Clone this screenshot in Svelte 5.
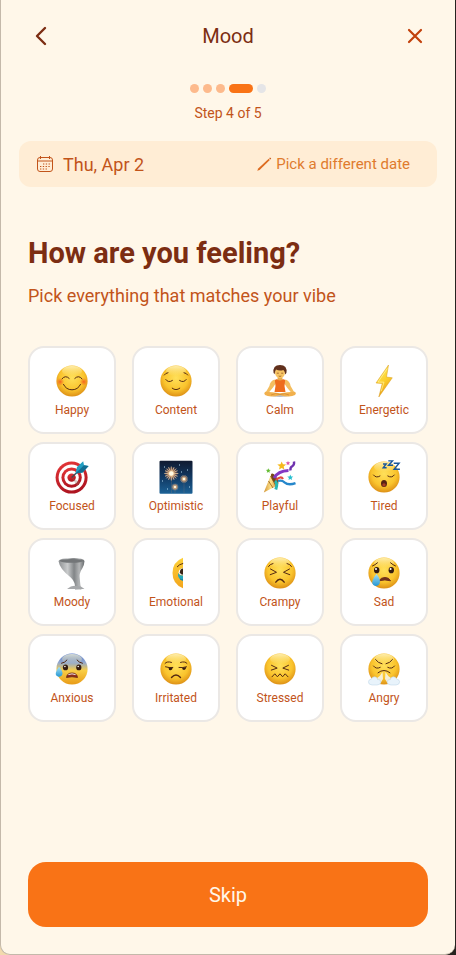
<script lang="ts">
  interface Mood {
    id: string;
    label: string;
  }

  const moods: Mood[] = [
    { id: 'happy', label: 'Happy' },
    { id: 'content', label: 'Content' },
    { id: 'calm', label: 'Calm' },
    { id: 'energetic', label: 'Energetic' },
    { id: 'focused', label: 'Focused' },
    { id: 'optimistic', label: 'Optimistic' },
    { id: 'playful', label: 'Playful' },
    { id: 'tired', label: 'Tired' },
    { id: 'moody', label: 'Moody' },
    { id: 'emotional', label: 'Emotional' },
    { id: 'crampy', label: 'Crampy' },
    { id: 'sad', label: 'Sad' },
    { id: 'anxious', label: 'Anxious' },
    { id: 'irritated', label: 'Irritated' },
    { id: 'stressed', label: 'Stressed' },
    { id: 'angry', label: 'Angry' }
  ];

  const totalSteps = 5;
  const currentStep = 4;

  let selected = $state<string[]>([]);

  function toggle(id: string) {
    selected = selected.includes(id)
      ? selected.filter(m => m !== id)
      : [...selected, id];
  }
</script>

{#snippet face(fill = 'url(#face)')}
  <circle cx="17" cy="17" r="15.6" {fill} />
  <ellipse cx="17" cy="7" rx="10" ry="5" fill="url(#shine)" />
{/snippet}

{#snippet star(x: number, y: number, r: number, fill: string)}
  <path
    transform="translate({x} {y}) scale({r})"
    d="M0-1 .28-.36 1-.3 .45.16 .6.85 0 .48-.6.85-.45.16-1-.3-.28-.36Z"
    {fill}
  />
{/snippet}

{#snippet burst(x: number, y: number, r: number)}
  <g transform="translate({x} {y}) scale({r})">
    <circle r="1" fill="url(#glow)" />
    <path
      d="M0-1V1M-1 0H1M-.7-.7.7.7M-.7.7.7-.7M-.4-.9.4.9M.4-.9-.4.9M-.9-.4.9.4M-.9.4.9-.4"
      stroke="#ffd9a0"
      stroke-width=".1"
    />
    <circle r=".32" fill="#fffbe6" />
  </g>
{/snippet}

{#snippet emoji(id: string)}
  <svg class="emoji" viewBox="0 0 34 34" aria-hidden="true">
    {#if id === 'happy'}
      {@render face()}
      <circle cx="5.2" cy="17.8" r="3.8" fill="url(#blush)" />
      <circle cx="28.8" cy="17.8" r="3.8" fill="url(#blush)" />
      <path class="ink" d="M7 14.8q3.4-4.2 7.2-.4M19.8 14.4q3.8-3.8 7.2.4M8.5 20.4q2.6 5.4 8.5 5.4t8.5-5.4" />
    {:else if id === 'content'}
      {@render face()}
      <path class="ink" d="M5.3 11q1.2-2 3.7-2.3M25 8.7q2.500.3 3.700 2.300M6.800 15.500q2.500 3.800 6.600 1M20.600 16.500q4.100 2.800 6.600-1M13.200 24.200q3.800 3 7.600 0" />
    {:else if id === 'calm'}
      <ellipse cx="17" cy="31.6" rx="9" ry="1.3" fill="#b9bdc6" />
      <path d="M11.5 15.5Q7 17 6.4 22L2.6 28.6 5 29.6 10 23.5 13 19ZM22.5 15.5Q27 17 27.6 22l3.8 6.6-2.4 1-5-6.1-3-4.5Z" fill="#f4bd5e" />
      <path d="M14.6 11h4.8v4.4l2.6.8-2 3h-6l-2-3 2.6-.8Z" fill="#e9a94b" />
      <path d="M11.8 16q1.5-1 2.2-.8 3 2.8 6 0 1.2 0 2.2.8l-.7 6 1 6H11.5l1-6Z" fill="#ee6c1b" />
      <path d="M2.2 27.8q7 .2 14.8 1.4 7.8-1.2 14.8-1.4 2 1.4.2 3.2-4.5 2.8-15 .2Q6.5 33.8 2 31q-1.600-1.600.2-3.200Z" fill="#f1b04d" />
      <path d="M8 31q5-2.6 9-.4 5-2 9 .4" fill="none" stroke="#c97f29" stroke-width=".6" />
      <ellipse cx="17" cy="8.6" rx="5" ry="5.6" fill="#f8c564" />
      <path d="M10.600 9q-1.200-8 6.400-8t6.400 8l-1.200 1.500q0-3-1.800-4.500-4 1.200-7.400-.4Q12 7.500 11.600 10.300Z" fill="#61301c" />
      <path d="M13.8 9.2h2M18.2 9.2h2M15.7 12q1.3.8 2.6 0" fill="none" stroke="#8a4a20" stroke-width=".7" />
    {:else if id === 'energetic'}
      <path d="M21.5 1 9 19l6.2.6L11.8 33 25.3 13.8l-5.800-.8Z" fill="url(#bolt)" stroke="#d99a1c" stroke-width=".5" stroke-linejoin="round" />
      <path d="M20.3 4.5 11 18l6 .2-2.800 9" fill="none" stroke="#fff2a0" stroke-width=".7" />
    {:else if id === 'focused'}
      <circle cx="16.6" cy="17.6" r="16" fill="url(#red)" />
      <circle cx="16.6" cy="17.6" r="13" fill="#fff" />
      <circle cx="16.6" cy="17.6" r="10.2" fill="url(#red)" />
      <circle cx="16.6" cy="17.6" r="7.2" fill="#fff" />
      <circle cx="16.6" cy="17.6" r="4.2" fill="url(#red)" />
      <path d="M17 18l5 8 3-4Z" fill="#8b6f60" opacity=".35" />
      <path d="M16.6 17.6 25 9.5" stroke="#3d4c58" stroke-width="1.4" />
      <path d="M20.5 13.5 22 7l6.2-5.8.8 4 4.6.8-6 6.5Z" fill="#219fc2" />
      <path d="M20.5 13.5 29 5.2l4.6.8-6 6.5Z" fill="#126e93" />
    {:else if id === 'optimistic'}
      <rect x=".5" y=".7" width="33" height="33" rx="1" fill="url(#night)" />
      <path d="M12.5 16v17M25 20v13M16 28v5" stroke="#d98b5a" stroke-width=".4" opacity=".4" />
      {@render burst(12.3, 13.5, 7)}
      {@render burst(25, 19, 4)}
      {@render burst(16, 27, 3.5)}
      <path d="M5 7h1M20 5h1M28 10h1M3 21h1M30 27h1M8 29h1M22 12h1" stroke="#b3d9ee" stroke-width="1" />
    {:else if id === 'playful'}
      <path d="M.8 32.6 8.5 13.5q5 2.500 6.500 11.500Z" fill="url(#cone)" />
      <path d="M5.5 21l4.5 7M7.5 16l5.5 10.2" stroke="#9d6720" stroke-width=".9" />
      <ellipse cx="11.7" cy="19" rx="2.4" ry="6.2" transform="rotate(-30 11.7 19)" fill="#754716" />
      <path d="M11 18q4-7 14.5-7.500" fill="none" stroke="#8438c4" stroke-width="3" />
      <path d="M13 20q5-4.500 7-1" fill="none" stroke="#e44b40" stroke-width="2.2" />
      <path d="M12 21q3 2 .8 8.5" fill="none" stroke="#28b7b2" stroke-width="3" />
      <path d="M27.5 10.5q-.6-3.200 2-4.500 2-1.200 1.500-4.500" fill="none" stroke="#6f32ae" stroke-width="2.4" />
      <path d="M15 21q4-1 6.5 1.3 4 3.5 11 .8" fill="none" stroke="#2687cb" stroke-width="2.3" />
      {@render star(5.3, 10.7, 2.5, '#66bd36')}
      {@render star(18.7, 5.8, 4.4, '#f6b91b')}
      {@render star(25, 3.2, 2.3, '#d955a9')}
      {@render star(27.3, 17.5, 3, '#29bfcf')}
    {:else if id === 'tired'}
      {@render face()}
      <path class="ink" d="M6.5 15q2.500 3.500 6.500 1M20.800 16q4 2.500 6.500-1" />
      <ellipse cx="17" cy="23.6" rx="3" ry="3.5" fill="#572313" />
      <ellipse cx="17" cy="24.8" rx="1.7" ry="1.6" fill="#a83d26" />
      <path d="M16 4h3.200l-3 3.800h3.400M21.300.9h4.200l-4 4.400H26M26.700 3.200h5.400l-5 6h5.800" fill="none" stroke="#18579c" stroke-width="1.4" />
    {:else if id === 'moody'}
      <g filter="url(#soft)">
        <path d="M3.5 5Q5 2 17 2t12.500 3q-.3 4.500-2 7-3.800 5.500-2.700 11 .2 6 1.600 10.500H20q1-7-4-11.800Q4.500 13 3.500 5Z" fill="url(#tornado)" />
        <ellipse cx="16.5" cy="4.8" rx="12" ry="1.9" fill="#737678" />
        <path d="M12 33q5-4 9-3 5-.7 8.500 3Z" fill="#a6a8aa" />
      </g>
    {:else if id === 'emotional'}
      <path d="M24 1.8v30.500q-10.500-4-10.500-15.200T24 1.800Z" fill="url(#half)" />
      <path class="ink" d="M18.3 10.7q2-2.500 5.500-3.200" />
      <path d="M24 12.2q-4 .2-4.500 4.500 1.700 3 4.500 2.600Z" fill="#fff" />
      <path d="M24 12.6q-3 .3-3.200 3.800.8 2.200 3.200 2.300Z" fill="#3b2416" />
      <path d="M19 17q2 3.200 5 2.400v5.600q-5.600-2-5-8Z" fill="#24a7bc" />
      <path d="M21 23q1.400 1 3 .8" fill="none" stroke="#126e8a" stroke-width=".8" />
    {:else if id === 'crampy'}
      {@render face()}
      <path class="ink" d="M5.5 10.5Q7 8 10 7.500M24 7.500q3 .5 4.500 3M7.500 13l6 3.300-6.300 2.400M26.500 13l-6 3.300 6.300 2.400" />
      <path class="ink thick" d="M12.8 26.2q4.200-6 8.400 0" />
    {:else if id === 'sad'}
      {@render face()}
      <ellipse cx="9.7" cy="14.2" rx="2.7" ry="3.1" fill="#341c10" />
      <ellipse cx="24.3" cy="14.2" rx="2.7" ry="3.1" fill="#341c10" />
      <circle cx="9" cy="13" r="1" fill="#fff" />
      <circle cx="23.6" cy="13" r="1" fill="#fff" />
      <path class="ink" d="M5.5 10Q8 9 10.500 6.800M23.500 6.800Q26 9 28.500 10" />
      <path d="M12 24.8q2-3.300 6-3.300t5.500 3.300q-5.500-1.800-11.500 0Z" fill="#71311b" stroke="#71311b" />
      <path d="M9.5 17.8q4.500 6.200 3.300 9.500-1.500 3.500-5 2.400-3.500-1.500-2.300-5 1-3.400 4-6.900Z" fill="url(#tear)" />
    {:else if id === 'anxious'}
      {@render face('url(#cold)')}
      <ellipse cx="10.5" cy="15.4" rx="2.6" ry="2.9" fill="#341c10" />
      <ellipse cx="23.8" cy="15.4" rx="2.6" ry="2.9" fill="#341c10" />
      <circle cx="9.9" cy="14.5" r=".8" fill="#fff" />
      <circle cx="23.2" cy="14.5" r=".8" fill="#fff" />
      <path class="ink" d="M6.5 11.300q3.800-.7 5.500-3.300M22 8q1.700 2.600 5.500 3.300" />
      <path d="M11.5 25.5q.5-4.500 5.500-4.500t5.500 4.500q-5.500-1.500-11 0Z" fill="#8f2c1d" stroke="#672514" stroke-width=".8" />
      <path d="M13.4 22.600q3.600-1.500 7.200 0" stroke="#fff" fill="none" stroke-width=".9" />
      <path d="M4 14.8q4 4.500 3.500 7.300-.7 3-3.700 2.700-3.500-.6-3-3.800.6-3 3.200-6.200Z" fill="url(#tear)" />
    {:else if id === 'irritated'}
      {@render face()}
      <path class="ink" d="M6 11.4q2-2.500 6.500-1M21.500 10.400q4.500-1.500 6.500 1M6.500 14.800q3.500 1.200 7.300.7M20 15.500q3.800.5 7.500-.7" />
      <path d="M9.5 15.4q2 .6 4.300.2-.5 2.800-2.400 2.600-1.900-.2-1.900-2.800ZM23 15.600q2.300.2 4.200-.5-.1 2.900-2 3-1.900.1-2.200-2.500Z" fill="#341c10" />
      <path class="ink thick" d="M12.5 25.5q4.500-5 9 0" />
    {:else if id === 'stressed'}
      {@render face()}
      <path class="ink" d="M8.5 13.300l5.700 2.800-5.900 2M25.500 13.300l-5.700 2.800 5.900 2" />
      <path class="ink" d="M9 24.800l2.800-3 2.600 3 2.600-3 2.600 3 2.600-3 2.800 3" />
    {:else if id === 'angry'}
      {@render face()}
      <path class="ink" d="M8.5 7.500q2.500 3.600 6.500 4.300M25.500 7.500q-2.500 3.600-6.500 4.300M6.500 14q2.500 3.600 6.700 1.400M20.800 15.400q4.200 2.200 6.700-1.400M11 20.800q6-4.800 12 0" />
      <path d="M15.500 20q-2 4-5.500 6l3 6 3-5ZM18.500 20q2 4 5.500 6l-3 6-3-5Z" fill="#f5fbff" opacity=".8" />
      <path d="M5 33q-3.800-.3-3.600-3.300.3-2.400 2.800-2.400.8-3 3.800-2.500 2.200.4 2.500 2.500 3.500 0 3.200 3Q13.300 33 10 33ZM29 33q3.800-.3 3.600-3.300-.3-2.400-2.800-2.400-.8-3-3.800-2.500-2.200.4-2.500 2.500-3.500 0-3.200 3 .4 2.700 3.700 2.700Z" fill="#e8f3fb" stroke="#b9d3e4" stroke-width=".5" />
    {/if}
  </svg>
{/snippet}

<!-- gradients shared by all the mood icons -->
<svg class="defs" width="0" height="0" aria-hidden="true">
  <defs>
    <radialGradient id="face" cx=".5" cy=".4" r=".6">
      <stop offset="0" stop-color="#ffe05a" />
      <stop offset=".65" stop-color="#fac42d" />
      <stop offset="1" stop-color="#dd9016" />
    </radialGradient>
    <linearGradient id="shine" x2="0" y2="1">
      <stop offset="0" stop-color="#fffbd8" stop-opacity=".75" />
      <stop offset="1" stop-color="#fff0a0" stop-opacity="0" />
    </linearGradient>
    <radialGradient id="blush">
      <stop offset="0" stop-color="#f4551f" stop-opacity=".9" />
      <stop offset="1" stop-color="#f4751f" stop-opacity=".1" />
    </radialGradient>
    <linearGradient id="bolt" x2=".4" y2="1">
      <stop offset="0" stop-color="#fff06b" />
      <stop offset=".6" stop-color="#fbcf2b" />
      <stop offset="1" stop-color="#e99a13" />
    </linearGradient>
    <linearGradient id="red" x2=".3" y2="1">
      <stop offset="0" stop-color="#e8393a" />
      <stop offset="1" stop-color="#ae1420" />
    </linearGradient>
    <linearGradient id="night" x2="0" y2="1">
      <stop offset="0" stop-color="#101a30" />
      <stop offset=".55" stop-color="#123c67" />
      <stop offset="1" stop-color="#1c6296" />
    </linearGradient>
    <radialGradient id="glow">
      <stop offset="0" stop-color="#fff1be" />
      <stop offset=".4" stop-color="#ef9a5a" stop-opacity=".65" />
      <stop offset="1" stop-color="#d9654a" stop-opacity="0" />
    </radialGradient>
    <linearGradient id="cone">
      <stop offset="0" stop-color="#d19334" />
      <stop offset=".5" stop-color="#ffe38b" />
      <stop offset="1" stop-color="#c17c25" />
    </linearGradient>
    <linearGradient id="tornado">
      <stop offset="0" stop-color="#8d9092" />
      <stop offset=".35" stop-color="#c9cbcc" />
      <stop offset=".6" stop-color="#828587" />
      <stop offset=".8" stop-color="#b4b6b7" />
      <stop offset="1" stop-color="#686b6d" />
    </linearGradient>
    <linearGradient id="half" x2="0" y2="1">
      <stop offset="0" stop-color="#fdd13a" />
      <stop offset="1" stop-color="#f3a51c" />
    </linearGradient>
    <linearGradient id="tear" x2="0" y2="1">
      <stop offset="0" stop-color="#a9e2f5" />
      <stop offset="1" stop-color="#2497d4" />
    </linearGradient>
    <linearGradient id="cold" x2="0" y2="1">
      <stop offset="0" stop-color="#5579cf" />
      <stop offset=".3" stop-color="#94a9cd" />
      <stop offset=".55" stop-color="#f9ce45" />
      <stop offset="1" stop-color="#e89b18" />
    </linearGradient>
    <filter id="soft">
      <feGaussianBlur stdDeviation=".6" />
    </filter>
  </defs>
</svg>

<div class="screen">
  <header class="topbar">
    <button class="icon-btn" aria-label="Back">
      <svg width="24" height="24" viewBox="0 0 24 24" fill="none" stroke="#7c2d12" stroke-width="2.4" stroke-linecap="round" stroke-linejoin="round">
        <path d="M16 4 8 12l8 8" />
      </svg>
    </button>
    <h1>Mood</h1>
    <button class="icon-btn" aria-label="Close">
      <svg width="24" height="24" viewBox="0 0 24 24" fill="none" stroke="#c2410c" stroke-width="2.2" stroke-linecap="round">
        <path d="M6 6l12 12M18 6 6 18" />
      </svg>
    </button>
  </header>

  <div class="progress">
    <div class="dots">
      {#each { length: totalSteps } as _, i}
        <span class="dot" class:done={i + 1 < currentStep} class:current={i + 1 === currentStep}></span>
      {/each}
    </div>
    <p class="step">Step {currentStep} of {totalSteps}</p>
  </div>

  <div class="date-bar">
    <span class="date">
      <svg width="18" height="18" viewBox="0 0 18 18" fill="none" stroke="#c2541a" aria-hidden="true">
        <rect x="1.5" y="2.5" width="15" height="14" rx="2.5" />
        <path d="M1.5 6h15M4.5 1v3M13.5 1v3" />
        <path d="M7 9h8M4 11.5h11M4 14h8" stroke-width="1.2" stroke-dasharray="1.3 1.5" />
      </svg>
      Thu, Apr 2
    </span>
    <button class="change-date">
      <svg width="16" height="16" viewBox="0 0 16 16" aria-hidden="true">
        <path d="M1.2 14.800 2.200 12.500 12.700 2.800l1.100 1.100L3.600 13.900Z" fill="#dd6b20" />
        <path d="M13.2 2.300 14 1.500 15.200 2.600l-.8.800Z" fill="#c2541a" />
      </svg>
      Pick a different date
    </button>
  </div>

  <main>
    <h2>How are you feeling?</h2>
    <p class="subtitle">Pick everything that matches your vibe</p>

    <div class="moods">
      {#each moods as mood (mood.id)}
        <button
          class="mood"
          class:selected={selected.includes(mood.id)}
          aria-pressed={selected.includes(mood.id)}
          onclick={() => toggle(mood.id)}
        >
          {@render emoji(mood.id)}
          <span>{mood.label}</span>
        </button>
      {/each}
    </div>
  </main>

  <footer>
    <button class="skip">{selected.length > 0 ? 'Next' : 'Skip'}</button>
  </footer>
</div>

<style>
  :global(body) {
    margin: 0;
    background: linear-gradient(90deg, #f3dbae, #26231f);
    font-family: Roboto, sans-serif;
  }

  button {
    font-family: inherit;
    cursor: pointer;
  }

  .defs {
    position: absolute;
  }

  .screen {
    box-sizing: border-box;
    min-height: 100vh;
    margin-right: 1px;
    display: flex;
    flex-direction: column;
    background: #fff7e9;
    border-left: 1px solid #c4b9aa;
    border-bottom: 1px solid #c4b9aa;
    border-radius: 0 0 10px 10px;
  }

  .topbar {
    display: flex;
    align-items: center;
    justify-content: space-between;
    padding: 16px 20px 0;
  }

  .topbar h1 {
    margin: 0;
    font-size: 20px;
    font-weight: 400;
    line-height: 24px;
    color: #7c2d12;
  }

  .icon-btn {
    display: flex;
    align-items: center;
    justify-content: center;
    width: 40px;
    height: 40px;
    padding: 0;
    border: none;
    background: none;
  }

  .progress {
    display: flex;
    flex-direction: column;
    align-items: center;
    gap: 8px;
    padding-top: 28px;
  }

  .dots {
    display: flex;
    gap: 4px;
  }

  .dot {
    width: 9px;
    height: 9px;
    border-radius: 5px;
    background: #e5e5e7;
  }

  .dot.done {
    background: #fdba8c;
  }

  .dot.current {
    width: 24px;
    background: #f97316;
  }

  .step {
    margin: 0;
    font-size: 14px;
    line-height: 24px;
    color: #c2541a;
  }

  .date-bar {
    display: flex;
    align-items: center;
    justify-content: space-between;
    min-height: 46px;
    margin: 16px 18px 0;
    padding: 0 27px 0 17px;
    border-radius: 12px;
    background: #ffedd5;
  }

  .date {
    display: flex;
    align-items: center;
    gap: 9px;
    font-size: 18px;
    color: #c2541a;
  }

  .change-date {
    display: flex;
    align-items: center;
    gap: 4px;
    padding: 0;
    border: none;
    background: none;
    font-size: 15px;
    color: #e07b2e;
  }

  main {
    padding: 48px 27px 24px;
  }

  h2 {
    margin: 0;
    font-size: 29px;
    font-weight: 700;
    line-height: 36px;
    color: #7c2d12;
  }

  .subtitle {
    margin: 13px 0 0;
    font-size: 18px;
    line-height: 24px;
    color: #c2541a;
  }

  .moods {
    display: grid;
    grid-template-columns: repeat(4, 1fr);
    gap: 8px 16px;
    margin-top: 38px;
  }

  .mood {
    display: flex;
    flex-direction: column;
    align-items: center;
    justify-content: center;
    gap: 4px;
    height: 88px;
    padding: 2px 0 0;
    border: 2px solid #ebe8e5;
    border-radius: 16px;
    background: #fff;
    font-size: 12px;
    line-height: 16px;
    color: #c2541a;
  }

  .mood.selected {
    border-color: #f97316;
    background: #ffedd5;
  }

  .emoji {
    width: 34px;
    height: 34px;
  }

  .ink {
    fill: none;
    stroke: #552a12;
    stroke-width: 1;
    stroke-linecap: round;
    stroke-linejoin: round;
  }

  .thick {
    stroke-width: 1.4;
  }

  footer {
    margin-top: auto;
    padding: 0 27px 27px;
  }

  .skip {
    width: 100%;
    height: 65px;
    border: none;
    border-radius: 18px;
    background: #f97316;
    font-size: 20px;
    color: #fff7e9;
  }
</style>
